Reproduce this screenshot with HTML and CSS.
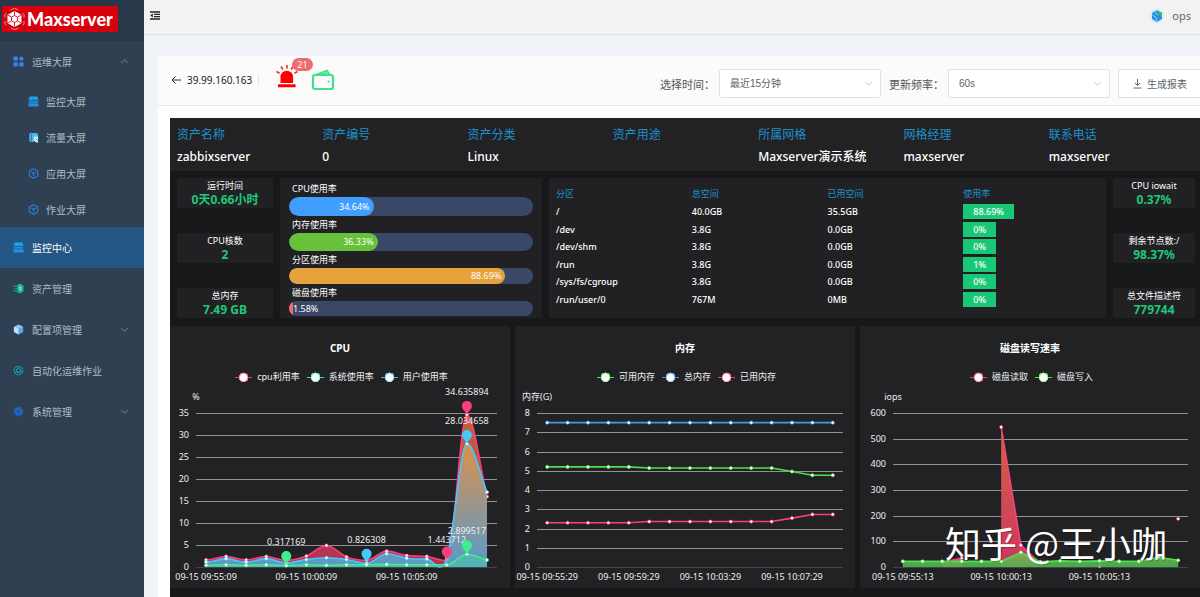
FILE: index.html
```html
<!DOCTYPE html>
<html lang="zh-CN">
<head>
<meta charset="utf-8">
<title>Maxserver</title>
<link rel="stylesheet" href="styles.css">
</head>
<body>
<svg class="defs" aria-hidden="true">
  <symbol id="chev" viewBox="0 0 10 10"><path d="M1.5 3.5 5 7l3.5-3.5" fill="none" stroke="currentColor"/></symbol>
  <symbol id="screen" viewBox="0 0 12 12"><path d="M2 .5h8L11.500 4H.5Z" fill="#1fa4ee"/><rect x=".5" y="4.600" width="11" height="3.400" fill="#1a6fc0"/><rect x=".5" y="8" width="11" height="3.500" rx="1" fill="#2090e0"/><path d="M2 6.300h2M5 6.300h2M8 6.300h2" stroke="#58b4f2" stroke-width=".8"/></symbol>
  <symbol id="hexy" viewBox="0 0 12 12"><path d="M6 .8 10.6 3.4v5.2L6 11.2 1.4 8.6V3.4Z" fill="none" stroke="#2b7fe0" stroke-width="1.2"/><path d="M3.6 4.4 6 6l2.4-1.600M6 6v2.800" fill="none" stroke="#2b7fe0" stroke-width="1.2"/></symbol>
</svg>
<div class="app">
  <aside class="sidebar">
    <div class="brand"><a class="logo" href="#">
      <svg width="25" height="24" viewBox="0 0 24 24" fill="none" stroke="#fff"><path d="M12 4.5 18.5 8v8L12 19.500 5.500 16V8Z" fill="#fff"/><path d="M12 8.500 15 10.200v3.600L12 15.500 9 13.800v-3.600ZM12 8.500v-4M15 10.200 18.500 8M15 13.800l3.500 2.200M12 15.500v4M9 13.800 5.500 16M9 10.200 5.500 8" stroke="#d8000c" stroke-width=".9"/><path d="M8 3 12 1.300 16 3M20 6l1.500 1.500v3M21.500 14v3L20 18.500M16 21l-4 1.700L8 21M4 18.500 2.500 17v-3M2.500 10.500v-3L4 6" stroke-width=".8" stroke-opacity=".7"/></svg>
      <span>Maxserver</span></a></div>
    <nav class="menu">
      <a class="item" href="#"><svg class="ico" viewBox="0 0 12 12" fill="#3b82ea"><rect x=".5" y=".5" width="4.800" height="4.800" rx=".8"/><rect x=".5" y="6.700" width="4.800" height="4.800" rx=".8"/><rect x="6.700" y="6.700" width="4.800" height="4.800" rx=".8"/><path d="m9.100 0 2.900 2.900-2.900 2.900-2.900-2.900Z"/></svg><span>运维大屏</span><svg class="arrow up"><use href="#chev"/></svg></a>
      <div class="submenu">
        <a class="item sub" href="#"><svg class="ico"><use href="#screen"/></svg><span>监控大屏</span></a>
        <a class="item sub" href="#"><svg class="ico" viewBox="0 0 12 12"><path d="M2.500 1h7l1.500 1.500v3L7 5v6H3L1.500 9.500V2Z" fill="#4db8ee"/><path d="M3.800 2v8.500" stroke="#2b78ad" fill="none"/><path d="M6.500 5h4.500v6.500H9L6.500 9Z" fill="#d8f2ff"/><path d="m8 7 3 3" stroke="#3a9ddc"/></svg><span>流量大屏</span></a>
        <a class="item sub" href="#"><svg class="ico"><use href="#hexy"/></svg><span>应用大屏</span></a>
        <a class="item sub" href="#"><svg class="ico"><use href="#hexy"/></svg><span>作业大屏</span></a>
      </div>
      <a class="item active" href="#"><svg class="ico"><use href="#screen"/></svg><span>监控中心</span></a>
      <a class="item" href="#"><svg class="ico" viewBox="0 0 12 12"><path d="M4.500 2 8 .5 11.500 3v6L8 11.500 4.500 10Z" fill="#1fae96"/><path d="M0 3.500h5M1.500 6H5M0 8.500h5" stroke="#12a38c" stroke-width="1.200"/><path d="M8 3v6M6.500 4.500l3 3M9.500 4.500l-3 3" stroke="#9ff0dc" stroke-width=".8"/></svg><span>资产管理</span></a>
      <a class="item" href="#"><svg class="ico" viewBox="0 0 12 12"><path d="M6 .5 11 3v5.500L6 11.500 1 8.500V3Z" fill="#8cc4fa"/><path d="M1 3 6 5.500v6L1 8.500Z" fill="#c4e2ff"/><path d="m6 5.500 5-2.500v5.500l-5 3Z" fill="#5ea2ee"/></svg><span>配置项管理</span><svg class="arrow"><use href="#chev"/></svg></a>
      <a class="item" href="#"><svg class="ico" viewBox="0 0 12 12" fill="none" stroke="#159db0"><circle cx="6" cy="6" r="4.600" stroke-width="1.300" stroke-dasharray="2.600 .8"/><circle cx="6" cy="6" r="2.200" stroke-width="1.200"/><path d="M6 1.500V4M10 8 8 7M2 8l2-1"/></svg><span>自动化运维作业</span></a>
      <a class="item" href="#"><svg class="ico" viewBox="0 0 12 12" fill="none" stroke="#2668c4"><circle cx="6" cy="6" r="3.600" fill="#2668c4"/><circle cx="6" cy="6" r="4.600" stroke-dasharray="1.800 1" stroke-width="1.400"/><circle cx="6" cy="6" r="1.700" stroke="#1c4b8c"/></svg><span>系统管理</span><svg class="arrow"><use href="#chev"/></svg></a>
    </nav>
  </aside>
  <div class="main">
    <header class="topbar">
      <button class="fold" aria-label="折叠菜单"><svg width="10" height="9" viewBox="0 0 10 9"><path d="M0 1h10M4 3.300h6M4 5.700h6M0 8h10" stroke="#222" stroke-width="1.300"/><path d="M2.800 2.500v4L.300 4.500Z" fill="#222"/></svg></button>
      <a class="user" href="#"><svg width="16" height="16" viewBox="0 0 16 16"><circle cx="8" cy="8" r="7.500" fill="#d4f0fa"/><path d="M8 2.200 13 5v6l-5 2.900L3 11V5Z" fill="#2f8fe6"/><path d="M8 2.500 13 5v4L9.500 7Z" fill="#2fb878"/><path d="M3.500 7 7 9.500 8 13M6 4.500 9 7" stroke="#8fd4f8" fill="none"/></svg><span>ops</span></a>
    </header>
    <section class="card">
      <div class="toolbar">
        <a class="back" href="#"><svg width="10" height="10" viewBox="0 0 10 10" fill="none" stroke="#333"><path d="M10 5H1M4.500 1.500 1 5l3.500 3.500"/></svg><span>39.99.160.163</span></a>
        <button class="alarm" aria-label="告警 21"><svg width="24" height="26" viewBox="0 0 24 26"><path d="M5.500 19v-6a6.300 6.300 0 0 1 12.600 0v6Z" fill="#f00"/><rect x="3" y="20.300" width="17.600" height="3" rx=".5" fill="#f00"/><path d="M12 1v3.500M6 2.500l1.800 3M18 2.500l-1.800 3M1.500 7.500l3 1.700M22.500 7.500l-3 1.700" stroke="#f22" stroke-width="1.600"/></svg><span class="badge">21</span></button>
        <button class="wallet" aria-label="资产"><svg width="24" height="22" viewBox="0 0 24 22" fill="none" stroke="#3fe28b" stroke-width="2.200"><rect x="2" y="6" width="20" height="14" rx="2"/><path d="M4 6 16 1.500 19 6M10 5.500l7-2" stroke-width="1.800"/><circle cx="17.500" cy="12.500" r="1" fill="#3fe28b" stroke="none"/></svg></button>
        <div class="filters">
          <label class="flabel" for="range">选择时间：</label>
          <div class="pick"><select id="range"><option>最近15分钟</option></select><svg class="caret"><use href="#chev"/></svg></div>
          <label class="flabel" for="freq">更新频率：</label>
          <div class="pick"><select id="freq"><option>60s</option></select><svg class="caret"><use href="#chev"/></svg></div>
          <button class="report"><svg width="9" height="10" viewBox="0 0 9 10" fill="none" stroke="#666"><path d="M4.500 0v6.500M2 4l2.500 2.500L7 4M.5 9h8"/></svg>生成报表</button>
        </div>
      </div>
      <div class="dash">
        <dl class="info">
          <div><dt>资产名称</dt><dd>zabbixserver</dd></div>
          <div><dt>资产编号</dt><dd>0</dd></div>
          <div><dt>资产分类</dt><dd>Linux</dd></div>
          <div><dt>资产用途</dt><dd></dd></div>
          <div><dt>所属网格</dt><dd>Maxserver演示系统</dd></div>
          <div><dt>网格经理</dt><dd>maxserver</dd></div>
          <div><dt>联系电话</dt><dd>maxserver</dd></div>
        </dl>
        <div class="overview">
          <div class="stats">
            <div class="stat"><span>运行时间</span><strong>0天0.66小时</strong></div>
            <div class="stat"><span>CPU核数</span><strong>2</strong></div>
            <div class="stat"><span>总内存</span><strong>7.49 GB</strong></div>
          </div>
          <div class="usage">
            <span class="ulabel">CPU使用率</span><div class="bar b1"><div class="fill blue" style="width:34.64%">34.64%</div></div>
            <span class="ulabel">内存使用率</span><div class="bar b2"><div class="fill green" style="width:36.33%">36.33%</div></div>
            <span class="ulabel">分区使用率</span><div class="bar b3"><div class="fill orange" style="width:88.69%">88.69%</div></div>
            <span class="ulabel">磁盘使用率</span><div class="bar b4"><div class="fill red" style="width:1.58%">1.58%</div></div>
          </div>
          <div class="parts">
            <table>
              <thead><tr><th>分区</th><th>总空间</th><th>已用空间</th><th>使用率</th></tr></thead>
              <tbody>
                <tr><td>/</td><td>40.0GB</td><td>35.5GB</td><td><span class="tag">88.69%</span></td></tr>
                <tr><td>/dev</td><td>3.8G</td><td>0.0GB</td><td><span class="tag">0%</span></td></tr>
                <tr><td>/dev/shm</td><td>3.8G</td><td>0.0GB</td><td><span class="tag">0%</span></td></tr>
                <tr><td>/run</td><td>3.8G</td><td>0.0GB</td><td><span class="tag">1%</span></td></tr>
                <tr><td>/sys/fs/cgroup</td><td>3.8G</td><td>0.0GB</td><td><span class="tag">0%</span></td></tr>
                <tr><td>/run/user/0</td><td>767M</td><td>0MB</td><td><span class="tag">0%</span></td></tr>
              </tbody>
            </table>
          </div>
          <div class="stats">
            <div class="stat"><span>CPU iowait</span><strong>0.37%</strong></div>
            <div class="stat"><span>剩余节点数:/</span><strong>98.37%</strong></div>
            <div class="stat"><span>总文件描述符</span><strong>779744</strong></div>
          </div>
        </div>
        <div class="charts">
          <figure class="chart"><figcaption>CPU</figcaption>
            <div class="legend"><span class="key pink">cpu利用率</span><span class="key mint">系统使用率</span><span class="key sky">用户使用率</span></div>
            <svg class="plot" id="cpu" viewBox="0 0 340 203"></svg></figure>
          <figure class="chart"><figcaption>内存</figcaption>
            <div class="legend"><span class="key lime">可用内存</span><span class="key azure">总内存</span><span class="key pink">已用内存</span></div>
            <svg class="plot" id="mem" viewBox="0 0 340 203"></svg></figure>
          <figure class="chart"><figcaption>磁盘读写速率</figcaption>
            <div class="legend"><span class="key pink">磁盘读取</span><span class="key lime">磁盘写入</span></div>
            <svg class="plot" id="disk" viewBox="0 0 340 203"></svg></figure>
        </div>
        <div class="watermark">知乎 @王小咖</div>
      </div>
    </section>
  </div>
</div>
<script src="charts.js"></script>
</body>
</html>
```

FILE: styles.css
```css
* { box-sizing: border-box; }
body { margin: 0; font-family: "Noto Sans", "Noto Sans CJK SC", sans-serif; font-size: 10px; background: #f0f3f7; color: #444; }
a { color: inherit; text-decoration: none; }
button { border: 0; padding: 0; background: none; font: inherit; color: inherit; }
svg { display: block; flex: none; }
.defs { position: absolute; width: 0; height: 0; }
.app { display: flex; min-height: 100vh; overflow: hidden; }

.sidebar { width: 144px; flex: none; background: #2f4053; }
.brand { height: 41px; padding: 6px 2px; background: #293849; }
.logo { display: flex; align-items: center; width: 116px; height: 26px; background: #d8000c; color: #fff; font: 900 18px/26px Lato, sans-serif; }
.item { display: flex; align-items: center; height: 41px; padding: 0 15px 0 13px; color: #b2bac3; font-size: 10px; }
.item span { flex: 1; margin-left: 8px; white-space: nowrap; }
.ico { width: 11px; height: 11px; }
.arrow { width: 9px; height: 9px; color: #7e8b98; }
.up { transform: rotate(180deg); }
.submenu { padding-top: 1px; }
.sub { height: 36px; padding-left: 28px; }
.sub span { margin-left: 7px; }
.active { background: #245783; color: #fff; }

.main { flex: 1; min-width: 0; display: flex; flex-direction: column; }
.topbar { display: flex; justify-content: space-between; align-items: center; height: 35px; padding: 0 9px 3px 6px; background: #f2f2f3; border-bottom: 1px solid #dcdfe4; }
.fold { padding: 0; }
.user { display: flex; align-items: center; gap: 7px; font-size: 11px; color: #666; }
.card { flex: 1; display: flex; flex-direction: column; margin: 21px 0 0 14px; background: #fff; }
.toolbar { display: flex; align-items: center; height: 50px; padding-left: 13px; background: #fbfbfb; border-bottom: 1px solid #e6e9ed; }
.back { display: flex; align-items: center; gap: 6px; margin-bottom: 2px; padding-right: 6px; border-right: 1px solid #e4e4e4; font-size: 10px; line-height: 12px; color: #222; }
.alarm { position: relative; margin-left: 16px; margin-bottom: 8px; }
.badge { position: absolute; left: 17px; top: -6px; padding: 0 5px; border-radius: 7px; background: #ee6c6c; color: #fff; font-size: 9px; line-height: 13px; }
.wallet { margin-left: 12px; margin-bottom: 2px; }
.filters { display: flex; align-items: center; margin: 6px 0 0 auto; }
.flabel { font-size: 11px; color: #555; white-space: nowrap; margin-right: 4px; }
.pick { position: relative; width: 162px; margin-right: 8px; }
.pick select { width: 100%; height: 29px; padding: 0 10px; border: 1px solid #dfe2e8; border-radius: 2px; background: #fff; font: 10px "Liberation Sans", "Noto Sans CJK SC", sans-serif; color: #606266; appearance: none; }
.caret { position: absolute; right: 8px; top: 10px; width: 9px; height: 9px; color: #bcc0c8; }
.report { display: flex; align-items: center; gap: 5px; height: 29px; padding: 0 13px 0 14px; border: 1px solid #dfe2e8; border-right: 0; border-radius: 2px 0 0 2px; background: #fff; font-size: 10px; color: #606266; white-space: nowrap; }

.dash { position: relative; flex: 1; margin: 12px 0 0 12px; background: #17181a; color: #fff; }
.info { display: grid; grid-template-columns: repeat(7, 1fr); margin: 0; padding: 7px 6px 4px 7px; background: #222224; }
.info dt { font-size: 12px; line-height: 20px; color: #1f8fcb; }
.info dd { height: 22px; margin: 0; font-size: 12px; line-height: 23px; font-weight: 500; white-space: nowrap; }
.overview { display: grid; grid-template-columns: 96px 262px 1fr 82px; gap: 7px; padding: 7px 5px 8px 7px; }
.stats { display: flex; flex-direction: column; justify-content: space-between; }
.stat { display: flex; flex-direction: column; align-items: center; height: 30px; background: #212123; font-size: 9px; white-space: nowrap; }
.stat span { line-height: 15px; }
.stat strong { font-size: 12px; line-height: 13px; color: #1fc77c; }
.usage { display: flex; flex-direction: column; height: 140px; padding: 2px 9px 0; background: #212123; }
.ulabel { padding-left: 3px; font-size: 9px; line-height: 17px; }
.bar { border-radius: 10px; background: #3a4868; overflow: hidden; }
.b1 { height: 19px; line-height: 19px; }
.b2 { height: 18px; line-height: 18px; }
.b3 { height: 16px; line-height: 16px; }
.b4 { height: 15px; line-height: 15px; }
.fill { display: flex; justify-content: flex-end; height: 100%; padding-right: 4px; border-radius: 10px; font-size: 9px; }
.blue { background: #409eff; }
.green { background: #67c23a; }
.orange { background: #e6a23c; }
.red { justify-content: flex-start; padding: 0 0 0 4px; background: #f56c6c; }
.parts { padding: 5px 7px 0; background: #212123; }
table { width: 100%; table-layout: fixed; border-collapse: collapse; font-size: 9px; line-height: 15px; }
th, td { height: 17px; padding: 0; text-align: left; white-space: nowrap; }
th { height: 20px; color: #1f8fcb; font-weight: 400; }
tbody tr:nth-child(even) td { height: 18px; }
td { font-weight: 500; }
.tag { display: block; width: max-content; padding: 0 10px; background: #19c876; }

.charts { display: grid; grid-template-columns: repeat(3, 1fr); gap: 5px; padding-bottom: 9px; }
.chart { margin: 0; padding-top: 13px; background: #222224; }
figcaption { height: 30px; font-size: 10px; line-height: 18px; font-weight: 700; text-align: center; }
.legend { display: flex; justify-content: center; gap: 7px; height: 16px; padding-left: 3px; font-size: 9px; line-height: 16px; }
.key { display: flex; align-items: center; gap: 5px; white-space: nowrap; color: #eee; }
.key::before { content: ""; width: 17px; height: 11px; background: radial-gradient(circle, #fff 3px, var(--c) 5px, transparent 5px), linear-gradient(var(--c), var(--c)) center / 100% 1px no-repeat; }
.pink { --c: #e8407a; }
.mint { --c: #3fe28b; }
.sky { --c: #48b9e8; }
.lime { --c: #4be04f; }
.azure { --c: #3f8fe0; }
.plot { width: 100%; height: auto; overflow: visible; font-size: 9px; fill: #eee; }
.watermark { position: absolute; right: 33px; bottom: 30px; font: 36px/50px "Noto Sans CJK SC", sans-serif; color: #fff; text-shadow: 1px 1px 1px rgba(0, 0, 0, .3); white-space: nowrap; }
```

FILE: charts.js
```js
const BOTTOM = 182, TOP = 28, N = 15;

function curve(pts, smooth) {
  const slope = (i) => {
    if (i === 0 || i === pts.length - 1) return 0;
    const a = pts[i][1] - pts[i - 1][1], b = pts[i + 1][1] - pts[i][1];
    return a * b <= 0 ? 0 : (a + b) / 2;
  };
  return pts.map(([x, y], i) => {
    if (i === 0) return `M${x} ${y}`;
    if (!smooth) return `L${x} ${y}`;
    const [px, py] = pts[i - 1], k = (x - px) / 3;
    const m = (j) => (j === pts.length - 1 ? y - py : slope(j)) / 3;
    return `C${px + k} ${py + m(i - 1)} ${x - k} ${y - m(i)} ${x} ${y}`;
  }).join('');
}

function draw(id, o) {
  const step = (o.right - o.left) / N;
  const X = (i) => o.left + step * (i + .5);
  const Y = (v) => BOTTOM - v / o.max * (BOTTOM - TOP);
  let s = `<text x="${o.unitX}" y="15" text-anchor="middle">${o.unit}</text>`;
  for (let v = 0; v <= o.max; v += o.tick) {
    const y = Math.round(Y(v)) + .5;
    s += `<path d="M${o.left} ${y}H${o.right}" stroke="${v ? '#929294' : '#444'}" stroke-width="1.2"/>`;
    s += `<text x="${o.left - 7}" y="${y + 2}" text-anchor="end">${v}</text>`;
  }
  for (const [i, t] of o.times) s += `<text x="${X(i)}" y="195" text-anchor="middle">09-15 ${t}</text>`;
  o.series.forEach((d, n) => {
    const runs = [[]];
    d.data.forEach((v, i) => v === null ? runs.push([]) : runs[runs.length - 1].push([X(i), Y(v)]));
    for (const r of runs.filter((r) => r.length)) {
      const c = curve(r, o.smooth);
      if (d.fill && r.length > 1) {
        s += `<linearGradient id="${id}${n}" x1="0" y1="0" x2="0" y2="1"><stop offset="0" stop-color="${d.fill[0]}"/><stop offset="1" stop-color="${d.fill[1]}"/></linearGradient>`;
        s += `<path d="${c}V${BOTTOM}H${r[0][0]}Z" fill="url(#${id}${n})" fill-opacity="${d.alpha || .8}"/>`;
      }
      s += `<path d="${c}" fill="none" stroke="${d.color}" stroke-width="1.6"/>`;
      for (const [x, y] of r) s += `<circle cx="${x}" cy="${y}" r="1.6" fill="#fff" stroke="${d.color}" stroke-width=".6"/>`;
    }
  });
  for (const [i, v, color, text] of o.pins || []) {
    const x = X(i), y = Y(v) + 1;
    s += `<path d="M${x} ${y}C${x - 1} ${y - 4} ${x - 5} ${y - 5} ${x - 5} ${y - 9}A5 5 0 0 1 ${x + 5} ${y - 9}C${x + 5} ${y - 5} ${x + 1} ${y - 4} ${x} ${y}Z" fill="${color}"/>`;
    s += `<text x="${x}" y="${y - 20 + (i === 12 ? 2 : 0)}" text-anchor="middle">${text}</text>`;
  }
  document.getElementById(id).innerHTML = s;
}

const PINK = '#fb3f7c', MINT = '#3fee8b', SKY = '#48c8f8', LIME = '#4be04f';

draw('cpu', {
  left: 26, right: 327, max: 35, tick: 5, unit: '%', unitX: 26, smooth: true,
  times: [[0, '09:55:09'], [5, '10:00:09'], [10, '10:05:09']],
  series: [
    { color: PINK, fill: ['#e8743c', '#d83462'], data: [1.6, 2.4, 1.6, 2.4, 1.5, 2.5, 4.9, 2.3, 1.5, 3.6, 2.6, 2.4, 1.44, 34.64, 16] },
    { color: SKY, fill: ['#e0964c', '#4ea6d8'], alpha: .9, data: [1.1, 1.9, 1.1, 1.9, .9, 1.7, 2.1, 1.7, .83, 3, 2, 1.8, 2, 28.03, 17] },
    { color: MINT, fill: ['#46d8b0', '#40e090'], alpha: .4, data: [.4, .5, .4, .5, .32, .5, .4, .5, .5, .6, .5, .5, .5, 2.9, 1.6] }
  ],
  pins: [[4, .7, MINT, '0.317169'], [8, 1.2, SKY, '0.826308'], [12, 1.7, PINK, '1.443712'], [13, 3.1, MINT, '2.899517'], [13, 28.2, SKY, '28.034658'], [13, 34.8, PINK, '34.635894']]
});

draw('mem', {
  left: 22, right: 328, max: 8, tick: 1, unit: '内存(G)', unitX: 22,
  times: [[0, '09:55:29'], [4, '09:59:29'], [8, '10:03:29'], [12, '10:07:29']],
  series: [
    { color: '#3f9cf0', data: Array(15).fill(7.5) },
    { color: LIME, data: [5.2, 5.2, 5.2, 5.2, 5.2, 5.14, 5.14, 5.14, 5.14, 5.14, 5.14, 5.14, 4.96, 4.77, 4.77] },
    { color: PINK, data: [2.3, 2.3, 2.3, 2.3, 2.3, 2.36, 2.36, 2.36, 2.36, 2.36, 2.36, 2.36, 2.54, 2.73, 2.73] }
  ]
});

draw('disk', {
  left: 33, right: 328, max: 600, tick: 100, unit: 'iops', unitX: 33,
  times: [[0, '09:55:13'], [5, '10:00:13'], [10, '10:05:13']],
  series: [
    { color: PINK, fill: ['#d86a40', '#d83468'], alpha: .95, data: [null, null, 18, 35, null, 545, 85, 12, null, null, 3, null, null, null, 188] },
    { color: LIME, fill: ['#8fae4c', '#48b850'], alpha: .9, data: [22, 22, 22, 22, 22, 22, 57, 20, 24, 22, 24, 22, 22, 38, 26] }
  ]
});
```
